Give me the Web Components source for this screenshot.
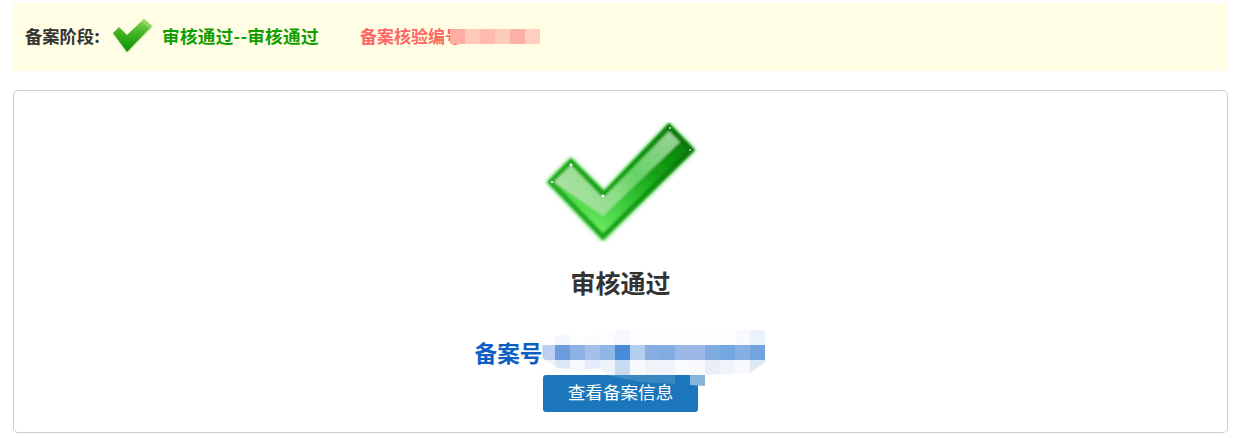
<!DOCTYPE html>
<html lang="zh">
<head>
<meta charset="utf-8">
<title>备案阶段</title>
<style>
  html, body { margin: 0; background: #fff; }
  body {
    padding: 3px 14px 0 13px;
    font-family: "Noto Sans CJK SC", "Liberation Sans", sans-serif;
    color: #333;
  }
</style>
</head>
<body>
<record-stage>
  <span slot="label">备案阶段:</span>
  <small-check slot="icon"></small-check>
  <span slot="status">审核通过--审核通过</span>
  <span slot="code">备案核验编号</span>
  <pixel-mosaic slot="mask" cell="15" colors="ffaca2 ffcbb8 ffbbb0 ffcbb9 ffb0a6 ffd0c0" cols="6"></pixel-mosaic>
</record-stage>

<record-result>
  <big-check slot="icon"></big-check>
  <span slot="title">审核通过</span>
  <span slot="number">备案号</span>
  <pixel-mosaic slot="mask" cell="15" cols="15" style="--clip: polygon(2px 7px, 27px 5px, 45px 7px, 75px 0, 225px 0, 225px 32px, 210px 43px, 165px 45px, 165px 56px, 100px 52px, 67px 45px, 60px 38px, 40px 40px, 17px 38px, 2px 28px)"
    colors="fdfdff f3f6fc fdfdfe fcfcfe fdfdff f5f8fc fdfdff fdfdff fdfdff fdfdff fdfdff fdfdff fcfdfe f8fafd eaf2fb
            bccfee 6c9cdd 8cb3e3 a4c0e8 8eb7e4 4a8bd9 b2ceef 88ade0 82ade0 9ab8e6 9cb8e4 7eabe0 74a6e0 86b0e3 72a5df
            eef3fb dce7f6 f5f8fc e3ecf8 eef3fb c8dcf1 f7fafd eff4fb eff4fb fafbfe f7f9fd e8eff9 eff4fb f7f9fd dce9f7
            ffffff ffffff ffffff ffffff 4d94c8 3f8bc2 3a88c1 3a88c1 3a88c1 1c76bb 87b5d9 ffffff ffffff ffffff ffffff"></pixel-mosaic>
  <action-button slot="action">查看备案信息</action-button>
</record-result>

<script>
class RecordStage extends HTMLElement {
  constructor() {
    super();
    this._shadow = this.attachShadow({ mode: 'open' });
    this._shadow.innerHTML = `
      <style>
        :host {
          display: flex;
          align-items: center;
          height: 68px;
          padding-left: 12px;
          background-color: #fffde3;
          font-size: 17.3px;
          font-weight: 700;
        }
        .Label { width: 87px; white-space: nowrap; color: #333; margin-top: -4px; }
        .Icon { display: flex; width: 50px; }
        .Status { width: 198px; white-space: nowrap; color: #0f9d00; margin-top: -4px; font-size: 17.6px; letter-spacing: .3px; }
        .Code { position: relative; white-space: nowrap; color: #ff6666; margin-top: -4px; font-size: 17px; }
        .Mask { position: absolute; left: 90px; top: 50%; margin-top: -6px; }
      </style>
      <span class="Label"><slot name="label"></slot></span>
      <span class="Icon"><slot name="icon"></slot></span>
      <span class="Status"><slot name="status"></slot></span>
      <span class="Code"><slot name="code"></slot><span class="Mask"><slot name="mask"></slot></span></span>
    `;
  }
}

class RecordResult extends HTMLElement {
  constructor() {
    super();
    this._shadow = this.attachShadow({ mode: 'open' });
    this._shadow.innerHTML = `
      <style>
        :host {
          display: flex;
          flex-direction: column;
          align-items: center;
          box-sizing: border-box;
          height: 343px;
          margin-top: 19px;
          padding-top: 31px;
          border: 1px solid #ccc;
          border-radius: 5px;
          background-color: #fff;
        }
        .Title {
          margin-top: 23px;
          font-size: 25px;
          font-weight: 700;
          line-height: 34px;
          color: #333;
        }
        .Number {
          display: flex;
          margin-top: 39px;
          font-size: 22.6px;
          font-weight: 700;
          line-height: 30px;
          color: #0d5fc4;
        }
        .Value { position: relative; width: 224px; }
        .Mask { position: absolute; left: -2px; top: -8px; z-index: 1; }
        .Action { margin-top: 7px; }
      </style>
      <slot name="icon"></slot>
      <div class="Title"><slot name="title"></slot></div>
      <div class="Number">
        <slot name="number"></slot>
        <span class="Value"><span class="Mask"><slot name="mask"></slot></span></span>
      </div>
      <div class="Action"><slot name="action"></slot></div>
    `;
  }
}

class ActionButton extends HTMLElement {
  constructor() {
    super();
    this._shadow = this.attachShadow({ mode: 'open' });
    this._shadow.innerHTML = `
      <style>
        :host { display: block; }
        .Button {
          display: flex;
          align-items: center;
          justify-content: center;
          box-sizing: border-box;
          width: 155px;
          height: 37px;
          padding-bottom: 4px;
          border-radius: 3px;
          background-color: #1c76bb;
          color: #fff;
          font-size: 17.6px;
        }
      </style>
      <div class="Button"><slot></slot></div>
    `;
  }
}

class PixelMosaic extends HTMLElement {
  constructor() {
    super();
    this._shadow = this.attachShadow({ mode: 'open' });
  }

  connectedCallback() {
    const cell = this.getAttribute('cell');
    const cols = this.getAttribute('cols');
    const colors = this.getAttribute('colors').trim().split(/\s+/);
    const cells = colors.map(c => `<i style="background:#${c}"></i>`).join('');

    this._shadow.innerHTML = `
      <style>
        :host { display: block; }
        .Grid {
          display: grid;
          grid-template-columns: repeat(${cols}, ${cell}px);
          grid-auto-rows: ${cell}px;
          clip-path: var(--clip, none);
        }
        i { display: block; }
      </style>
      <div class="Grid">${cells}</div>
    `;
  }
}

class SmallCheck extends HTMLElement {
  constructor() {
    super();
    this._shadow = this.attachShadow({ mode: 'open' });
    this._shadow.innerHTML = `
      <style>:host { display: block; width: 41px; height: 36px; margin-top: -3px; }</style>
      <svg width="41" height="36" viewBox="0 0 41 36">
        <defs>
          <linearGradient id="face" x1="0.6" y1="0" x2="0.5" y2="1">
            <stop offset="0" stop-color="#86d452"/>
            <stop offset="0.45" stop-color="#3fb322"/>
            <stop offset="1" stop-color="#0c9400"/>
          </linearGradient>
          <filter id="soft" x="-20%" y="-20%" width="140%" height="140%">
            <feGaussianBlur stdDeviation="1.2"/>
          </filter>
          <filter id="edge" x="-5%" y="-5%" width="110%" height="110%">
            <feGaussianBlur stdDeviation=".5"/>
          </filter>
        </defs>
        <polygon points="1,16 7,10 15,18 32,2 40,9 15,35" fill="#7b9a55" opacity=".35" filter="url(#soft)"/>
        <polygon points="1,15 7,9 15,17 32,1 40,8 15,34" fill="url(#face)" filter="url(#edge)"/>
        <polygon points="32,2 39,8 37,10 30,4" fill="#a6e27c" opacity=".6" filter="url(#edge)"/>
      </svg>
    `;
  }
}

class BigCheck extends HTMLElement {
  constructor() {
    super();
    this._shadow = this.attachShadow({ mode: 'open' });
    this._shadow.innerHTML = `
      <style>:host { display: block; width: 154px; height: 120px; }</style>
      <svg width="154" height="120" viewBox="543 122 154 120">
        <defs>
          <linearGradient id="rim" x1="0" y1="0.5" x2="1" y2="0.3">
            <stop offset="0" stop-color="#28ae28"/>
            <stop offset="0.6" stop-color="#0f9a0f"/>
            <stop offset="1" stop-color="#087208"/>
          </linearGradient>
          <linearGradient id="lower" x1="1" y1="0" x2="0.35" y2="1">
            <stop offset="0" stop-color="#067a06"/>
            <stop offset="0.38" stop-color="#149f14"/>
            <stop offset="0.75" stop-color="#3fce3f"/>
            <stop offset="1" stop-color="#6cee5e"/>
          </linearGradient>
          <linearGradient id="gloss" x1="0" y1="0.6" x2="1" y2="0.1">
            <stop offset="0" stop-color="#aee0a6"/>
            <stop offset="0.35" stop-color="#8ade84"/>
            <stop offset="0.55" stop-color="#66d266"/>
            <stop offset="1" stop-color="#98d296"/>
          </linearGradient>
          <filter id="glow" x="-15%" y="-15%" width="130%" height="130%">
            <feGaussianBlur stdDeviation="2"/>
          </filter>
          <filter id="soft" x="-5%" y="-5%" width="110%" height="110%">
            <feGaussianBlur stdDeviation=".8"/>
          </filter>
          <filter id="spark" x="-100%" y="-100%" width="300%" height="300%">
            <feGaussianBlur stdDeviation=".5"/>
          </filter>
        </defs>
        <polygon points="545,182 570,157 603,190 668,122 695,150 602,242" fill="#35d635" opacity=".7" filter="url(#glow)"/>
        <g filter="url(#soft)">
          <polygon points="547,182 570,159 603,192 668,124 693,150 602,239" fill="url(#rim)" stroke="url(#rim)" stroke-width="1.5" stroke-linejoin="round"/>
          <polygon points="553,182 570,165 603,199 668,131 686,150 602,233" fill="url(#lower)"/>
          <polygon points="553,182 570,165 602,198 668,131 679,142 602,216" fill="url(#gloss)"/>
        </g>
        <g fill="#fff" filter="url(#spark)">
          <circle cx="570" cy="165" r="1.4" opacity=".9"/>
          <circle cx="602" cy="196" r="1.6"/>
          <circle cx="551" cy="182" r="1.1"/>
          <circle cx="669" cy="128" r="1" opacity=".8"/>
          <circle cx="689" cy="150" r=".9" opacity=".8"/>
        </g>
      </svg>
    `;
  }
}

customElements.define('record-stage', RecordStage);
customElements.define('record-result', RecordResult);
customElements.define('action-button', ActionButton);
customElements.define('pixel-mosaic', PixelMosaic);
customElements.define('small-check', SmallCheck);
customElements.define('big-check', BigCheck);
</script>
</body>
</html>
